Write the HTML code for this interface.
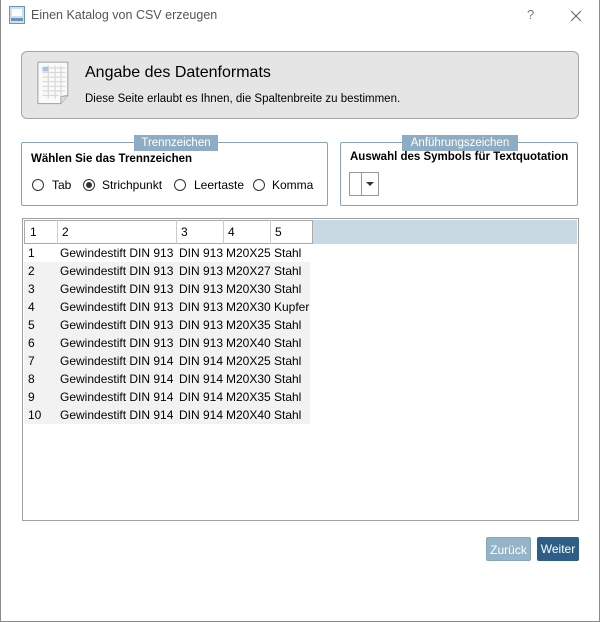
<!DOCTYPE html>
<html><head><meta charset="utf-8"><style>
*{box-sizing:border-box;margin:0;padding:0}
body{width:600px;height:622px;background:#fff;font-family:"Liberation Sans",sans-serif;font-size:12px;color:#000;position:relative;overflow:hidden}
.win{position:absolute;left:0;top:0;width:600px;height:622px;border:1px solid #8a8a8a;border-top:none}
.abs{position:absolute}
.title{left:31px;top:8px;font-size:12.5px;color:#555}
.hdr{left:21px;top:51px;width:558px;height:68px;background:#e5e5e5;border:1px solid #a6a6a6;border-radius:6px}
.grp{border:1px solid #86a3bb;border-radius:2px}
.leg{background:#8eadc5;color:#fff;font-size:11.5px;text-align:center;height:16px;line-height:16px;white-space:nowrap}
.radio{position:absolute;width:12px;height:12px;border:1px solid #333;border-radius:50%}
.radio.on::after{content:"";position:absolute;left:2px;top:2px;width:6px;height:6px;border-radius:50%;background:#333}
.tbl{left:22px;top:218px;width:557px;height:303px;border:1px solid #a0a0a0}
.row{position:absolute;left:2px;height:18px;line-height:18px;font-size:12px}
.row span{position:absolute;top:0;white-space:nowrap}
.btn{height:24px;line-height:24px;color:#fff;font-size:12px;text-align:center;border-radius:2px}
.b{font-weight:bold;font-size:11.5px;white-space:nowrap}
</style></head><body>
<div class="win"></div>
<svg class="abs" style="left:9px;top:6px" width="16" height="18" viewBox="0 0 16 18"><rect x="0.5" y="0.5" width="15" height="17" fill="#cfe0ec" stroke="#6c94b5"/><rect x="3" y="3" width="10" height="7" fill="#fff"/><rect x="2" y="12" width="12" height="3" fill="#6c94b5"/></svg>
<div class="abs title">Einen Katalog von CSV erzeugen</div>
<div class="abs" style="left:527px;top:7px;color:#777;font-size:13px">?</div>
<svg class="abs" style="left:570px;top:10px" width="12" height="12"><path d="M1 1L11 11M11 1L1 11" stroke="#666" stroke-width="1.1"/></svg>
<div class="abs hdr"></div>
<svg class="abs" style="left:35px;top:61px" width="38" height="46" viewBox="0 0 32 40"><path d="M2 1H28V30L22 37H2Z" fill="#fafafa" stroke="#aaa"/><path d="M22 37L22 31L28 30" fill="#ddd" stroke="#aaa"/><g stroke="#d8d8d8"><path d="M6 6H26M6 10H26M6 14H26M6 18H26M6 22H26M6 26H26M6 30H20M11 4V33M17 4V33M22 4V31"/></g><rect x="6" y="5" width="5" height="4" fill="#a9c4e0"/></svg>
<div class="abs" style="left:85px;top:64px;font-size:16px">Angabe des Datenformats</div>
<div class="abs" style="left:85px;top:93px;font-size:11.5px">Diese Seite erlaubt es Ihnen, die Spaltenbreite zu bestimmen.</div>

<div class="abs grp" style="left:21px;top:142px;width:307px;height:64px"></div>
<div class="abs leg" style="left:134px;top:135px;width:84px">Trennzeichen</div>
<div class="abs b" style="left:31px;top:153px">Wählen Sie das Trennzeichen</div>
<span class="abs radio" style="left:32px;top:179px"></span><span class="abs" style="left:52px;top:178px">Tab</span>
<span class="abs radio on" style="left:83px;top:179px"></span><span class="abs" style="left:102px;top:178px">Strichpunkt</span>
<span class="abs radio" style="left:174px;top:179px"></span><span class="abs" style="left:194px;top:178px">Leertaste</span>
<span class="abs radio" style="left:253px;top:179px"></span><span class="abs" style="left:272px;top:178px">Komma</span>

<div class="abs grp" style="left:340px;top:142px;width:238px;height:64px"></div>
<div class="abs leg" style="left:402px;top:135px;width:116px">Anführungszeichen</div>
<div class="abs b" style="left:350px;top:151px">Auswahl des Symbols für Textquotation</div>
<div class="abs" style="left:349px;top:172px;width:30px;height:24px;border:1px solid #999"></div>
<div class="abs" style="left:361px;top:172px;width:1px;height:24px;background:#999"></div>
<div class="abs" style="left:366px;top:182px;width:0;height:0;border-left:4px solid transparent;border-right:4px solid transparent;border-top:4px solid #333"></div>

<div class="abs tbl"></div>
<div class="abs" style="left:24px;top:220px;width:553px;height:24px;background:#c8d9e4"></div>
<div class="abs" style="left:24px;top:220px;width:289px;height:24px;background:#fff;border:1px solid #aaa"></div>
<div class="abs" style="left:57px;top:220px;width:1px;height:24px;background:#ccc"></div>
<div class="abs" style="left:176px;top:220px;width:1px;height:24px;background:#ccc"></div>
<div class="abs" style="left:223px;top:220px;width:1px;height:24px;background:#ccc"></div>
<div class="abs" style="left:270px;top:220px;width:1px;height:24px;background:#ccc"></div>
<div class="abs row" style="left:24px;top:223px"><span style="left:6px">1</span><span style="left:38px">2</span><span style="left:157px">3</span><span style="left:204px">4</span><span style="left:251px">5</span></div>
<div class="abs" style="left:24px;top:262px;width:286px;height:162px;background:#f2f2f2"></div>
<div class="abs btn" style="left:486px;top:537px;width:45px;background:#95b4ca;border:1px solid #86a5bb">Zurück</div>
<div class="abs btn" style="left:537px;top:537px;width:42px;background:#2d5f86">Weiter</div>
<div style="position:absolute;left:0;top:0">
<div class="row" style="left:24px;top:244px"><span style="left:4px">1</span><span style="left:36px">Gewindestift DIN 913</span><span style="left:155px">DIN 913</span><span style="left:202px">M20X25</span><span style="left:250px">Stahl</span></div>
<div class="row" style="left:24px;top:262px"><span style="left:4px">2</span><span style="left:36px">Gewindestift DIN 913</span><span style="left:155px">DIN 913</span><span style="left:202px">M20X27</span><span style="left:250px">Stahl</span></div>
<div class="row" style="left:24px;top:280px"><span style="left:4px">3</span><span style="left:36px">Gewindestift DIN 913</span><span style="left:155px">DIN 913</span><span style="left:202px">M20X30</span><span style="left:250px">Stahl</span></div>
<div class="row" style="left:24px;top:298px"><span style="left:4px">4</span><span style="left:36px">Gewindestift DIN 913</span><span style="left:155px">DIN 913</span><span style="left:202px">M20X30</span><span style="left:250px">Kupfer</span></div>
<div class="row" style="left:24px;top:316px"><span style="left:4px">5</span><span style="left:36px">Gewindestift DIN 913</span><span style="left:155px">DIN 913</span><span style="left:202px">M20X35</span><span style="left:250px">Stahl</span></div>
<div class="row" style="left:24px;top:334px"><span style="left:4px">6</span><span style="left:36px">Gewindestift DIN 913</span><span style="left:155px">DIN 913</span><span style="left:202px">M20X40</span><span style="left:250px">Stahl</span></div>
<div class="row" style="left:24px;top:352px"><span style="left:4px">7</span><span style="left:36px">Gewindestift DIN 914</span><span style="left:155px">DIN 914</span><span style="left:202px">M20X25</span><span style="left:250px">Stahl</span></div>
<div class="row" style="left:24px;top:370px"><span style="left:4px">8</span><span style="left:36px">Gewindestift DIN 914</span><span style="left:155px">DIN 914</span><span style="left:202px">M20X30</span><span style="left:250px">Stahl</span></div>
<div class="row" style="left:24px;top:388px"><span style="left:4px">9</span><span style="left:36px">Gewindestift DIN 914</span><span style="left:155px">DIN 914</span><span style="left:202px">M20X35</span><span style="left:250px">Stahl</span></div>
<div class="row" style="left:24px;top:406px"><span style="left:4px">10</span><span style="left:36px">Gewindestift DIN 914</span><span style="left:155px">DIN 914</span><span style="left:202px">M20X40</span><span style="left:250px">Stahl</span></div>
</div>
</body></html>
